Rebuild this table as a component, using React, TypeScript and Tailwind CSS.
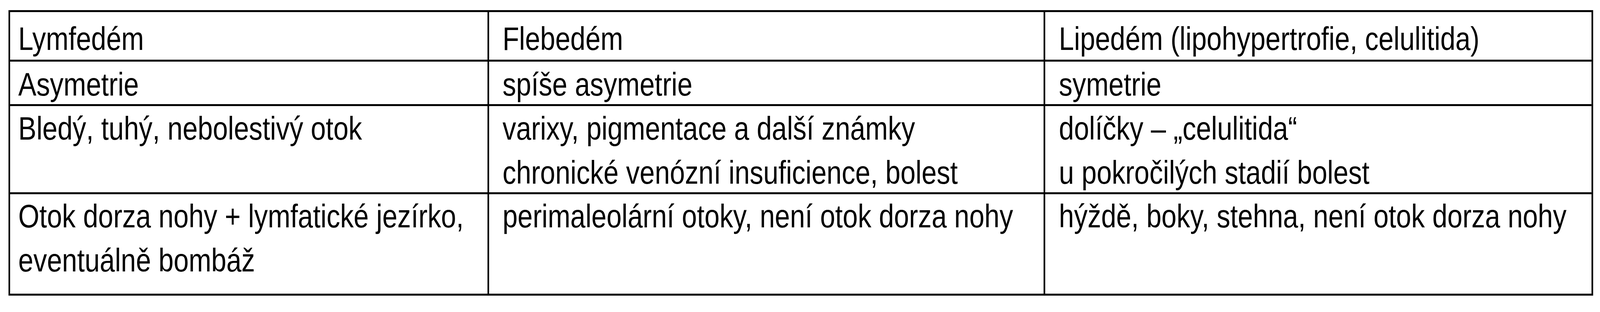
const rows: { h: string; pad: string; cells: string[][] }[] = [
  {
    h: "h-[122px]",
    pad: "pt-[12px]",
    cells: [["Lymfedém"], ["Flebedém"], ["Lipedém (lipohypertrofie, celulitida)"]],
  },
  {
    h: "h-[114px] border-t-[5px]",
    pad: "pt-[2px]",
    cells: [["Asymetrie"], ["spíše asymetrie"], ["symetrie"]],
  },
  {
    h: "h-[226px] border-t-[5px]",
    pad: "pt-px",
    cells: [
      ["Bledý, tuhý, nebolestivý otok"],
      ["varixy, pigmentace a další známky", "chronické venózní insuficience, bolest"],
      ["dolíčky – „celulitida“", "u pokročilých stadií bolest"],
    ],
  },
  {
    h: "h-[260px] border-t-[5px]",
    pad: "pt-0",
    cells: [
      ["Otok dorza nohy + lymfatické jezírko,", "eventuálně bombáž"],
      ["perimaleolární otoky, není otok dorza nohy"],
      ["hýždě, boky, stehna, není otok dorza nohy"],
    ],
  },
];

const cols = [
  "w-[1461px] pl-[25px]",
  "w-[1702px] pl-[41px] border-l-[5px]",
  "w-[1677px] pl-[42px] border-l-[5px]",
];

export default function App() {
  return (
    <div className="w-full h-[800px] bg-white overflow-hidden pt-[26px] font-['Liberation_Sans',Arial,sans-serif] text-black">
      <div className="w-[4876px] pl-[26px] origin-top-left scale-x-[0.83643]">
        <div className="w-[4850px] border-[5px] border-black">
          {rows.map((r, i) => (
            <div key={i} className={`flex border-black ${r.h}`}>
              {r.cells.map((lines, j) => (
                <div key={j} className={`border-black shrink-0 ${cols[j]} ${r.pad} text-[83px] leading-[113px] whitespace-nowrap`}>
                  {lines.map((t, k) => (
                    <div key={k}>{t}</div>
                  ))}
                </div>
              ))}
            </div>
          ))}
        </div>
      </div>
    </div>
  );
}
